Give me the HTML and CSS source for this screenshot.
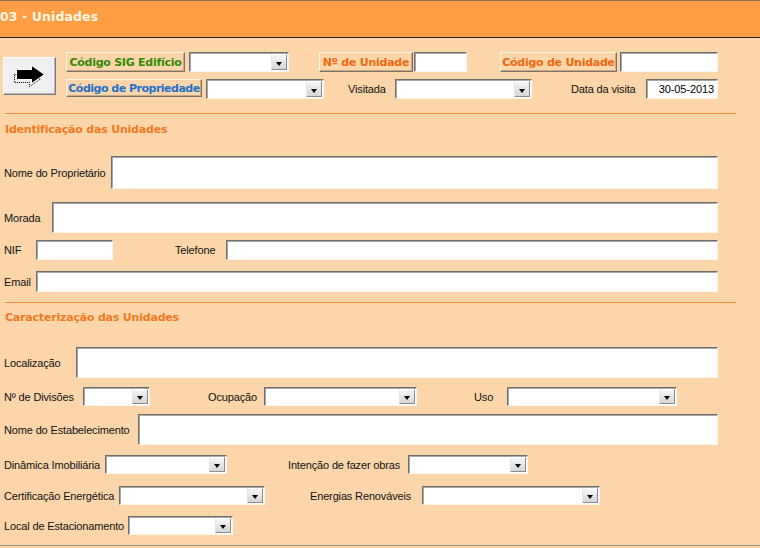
FILE: index.html
```html
<!DOCTYPE html>
<html lang="pt">
<head>
<meta charset="utf-8">
<title>03 - Unidades</title>
<link rel="stylesheet" href="styles.css">
</head>
<body>
<div class="form">
  <div class="titlebar">03 - Unidades</div>

  <div class="top">
    <div class="gobtn" role="button" aria-label="Ir">
      <svg width="51" height="36" viewBox="0 0 51 36">
        <path d="M10.5 16.5 H25.5 V13.5 L36.5 21 L25.5 28.5 V24.5 H10.5 Z" fill="none" stroke="#000" stroke-width="1" stroke-dasharray="1 1"/>
        <path d="M13 12 H28 V8.5 L39.5 16.5 L28 24.5 V21 H13 Z" fill="#000" stroke="#ffffff" stroke-width="1.5" paint-order="stroke"/>
        <path d="M13 12 H28 V8.5 L39.5 16.5 L28 24.5 V21 H13 Z" fill="#000"/>
      </svg>
    </div>
    <div class="toprows">
      <div class="trow">
        <span class="tag green w119">Código SIG Edifício</span>
        <div class="combo ml4 w100"><span class="dd"></span></div>
        <span class="tag orange ml30 w94">Nº de Unidade</span>
        <div class="field ml1 w53"></div>
        <span class="tag orange ml33 w117">Código de Unidade</span>
        <div class="field ml3 w98"></div>
      </div>
      <div class="trow">
        <span class="tag blue tight w136 h18">Código de Propriedade</span>
        <div class="combo ml4 w118"><span class="dd"></span></div>
        <span class="lbl ml24 w47">Visitada</span>
        <div class="combo w137"><span class="dd"></span></div>
        <span class="lbl ml39 w75">Data da visita</span>
        <div class="field date w72">30-05-2013</div>
      </div>
    </div>
  </div>

  <div class="sep sep1"></div>
  <div class="section-title st1">Identificação das Unidades</div>

  <div class="row r-nome h33"><span class="lbl w107">Nome do Proprietário</span><div class="field grow"></div></div>
  <div class="row r-morada h31"><span class="lbl w48">Morada</span><div class="field grow"></div></div>
  <div class="row r-nif h20">
    <span class="lbl w32">NIF</span><div class="field w77"></div>
    <span class="lbl ml62 w51">Telefone</span><div class="field grow"></div>
  </div>
  <div class="row r-email h21"><span class="lbl w32">Email</span><div class="field grow"></div></div>

  <div class="sep sep2"></div>
  <div class="section-title st2">Caracterização das Unidades</div>

  <div class="row r-loc h31"><span class="lbl w72">Localização</span><div class="field grow"></div></div>
  <div class="row r-div h19">
    <span class="lbl w79">Nº de Divisões</span><div class="combo w67"><span class="dd"></span></div>
    <span class="lbl ml58 w56">Ocupação</span><div class="combo w153"><span class="dd"></span></div>
    <span class="lbl ml57 w33">Uso</span><div class="combo w170"><span class="dd"></span></div>
  </div>
  <div class="row r-est h31"><span class="lbl w134">Nome do Estabelecimento</span><div class="field grow"></div></div>
  <div class="row r-din h19">
    <span class="lbl w101">Dinâmica Imobiliária</span><div class="combo w122"><span class="dd"></span></div>
    <span class="lbl ml61 w120">Intenção de fazer obras</span><div class="combo w120"><span class="dd"></span></div>
  </div>
  <div class="row r-cert h19">
    <span class="lbl w115">Certificação Energética</span><div class="combo w146"><span class="dd"></span></div>
    <span class="lbl ml45 w112">Energias Renováveis</span><div class="combo w178"><span class="dd"></span></div>
  </div>
  <div class="row r-local h19">
    <span class="lbl w124">Local de Estacionamento</span><div class="combo w105"><span class="dd"></span></div>
  </div>

  <div class="bottomline"></div>
</div>
</body>
</html>
```

FILE: styles.css
```css
* { box-sizing: border-box; }
html, body { margin: 0; padding: 0; }
body {
  width: 760px;
  height: 548px;
  overflow: hidden;
  background: #fdd5ab;
  font-family: "Liberation Sans", Arial, sans-serif;
  font-size: 11px;
  color: #111;
}
.form { width: 760px; height: 548px; }

.titlebar {
  height: 38px;
  background: #fe9e44;
  border-top: 1px solid #8d6a4c;
  border-bottom: 1px solid #2a2420;
  color: #fff6e4;
  font-family: "DejaVu Sans", Verdana, sans-serif;
  font-weight: bold;
  font-size: 12.5px;
  letter-spacing: 0.1px;
  line-height: 32px;
  padding-left: 0;
}

.top {
  display: flex;
  align-items: center;
  padding: 14px 0 0 3px;
}
.gobtn {
  flex: none;
  width: 53px;
  height: 38px;
  background: #efefef;
  border: 1px solid;
  border-color: #ffffff #7a7a7a #7a7a7a #ffffff;
  box-shadow: inset -1px -1px 0 #b8b8b8;
}
.gobtn svg { display: block; }
.toprows {
  margin-left: 10px;
  display: flex;
  flex-direction: column;
  gap: 7px;
}
.trow {
  display: flex;
  align-items: center;
  height: 20px;
}
.trow > * { height: 20px; }
.trow > .lbl { line-height: 20px; }
.trow > .h18 { height: 18px; align-self: flex-start; }

.tag {
  display: flex;
  align-items: center;
  justify-content: center;
  font-family: "DejaVu Sans", Verdana, sans-serif;
  font-weight: bold;
  font-size: 11px;
  letter-spacing: -0.25px;
  white-space: nowrap;
  overflow: hidden;
  border: 1px solid;
  border-color: #fff3e6 #7d7066 #7d7066 #fff3e6;
  box-shadow: inset -1px -1px 0 #c9a888;
}
.tag.tight { letter-spacing: -0.5px; }
.green { color: #2f8a06; }
.orange { color: #f2680e; }
.blue { color: #1b72c8; }

.lbl {
  display: block;
  white-space: nowrap;
  letter-spacing: -0.15px;
  flex: none;
}

.field, .combo {
  flex: none;
  background: #ffffff;
  border: 1px solid;
  border-color: #6e6e6e #fff4ea #fff4ea #6e6e6e;
  box-shadow: inset 1px 1px 0 #a9a9a9;
}
.field.grow { flex: 1 1 auto; }
.field.date {
  text-align: right;
  padding-right: 3px;
  line-height: 18px;
  color: #000;
  letter-spacing: -0.1px;
}
.combo {
  display: flex;
  justify-content: flex-end;
  align-items: center;
  padding: 1px 1px 1px 0;
}
.dd {
  display: flex;
  align-items: center;
  justify-content: center;
  width: 16px;
  height: 100%;
  background: linear-gradient(#f6f6f6, #d6d6d6);
  border: 1px solid;
  border-color: #ffffff #8c8c8c #8c8c8c #e6e6e6;
}
.dd::after {
  content: "";
  display: block;
  margin-top: 3px;
  border-left: 3px solid transparent;
  border-right: 3px solid transparent;
  border-top: 4px solid #000;
}

.sep {
  height: 1px;
  background: #e8903c;
  margin-left: 5px;
  margin-right: 24px;
}
.sep1 { margin-top: 14px; }
.sep2 { margin-top: 10px; }

.section-title {
  height: 14px;
  line-height: 14px;
  padding-left: 5px;
  font-family: "DejaVu Sans", Verdana, sans-serif;
  font-weight: bold;
  font-size: 11px;
  letter-spacing: -0.2px;
  color: #f07a22;
}
.st1 { margin-top: 9px; }
.st2 { margin-top: 8px; }

.row {
  display: flex;
  align-items: center;
  padding: 0 42px 0 4px;
}
.row > .field, .row > .combo { align-self: stretch; }

.h33 { height: 33px; }
.h31 { height: 31px; }
.h21 { height: 21px; }
.h20 { height: 20px; }
.h19 { height: 19px; }

.r-nome { margin-top: 19px; }
.r-morada { margin-top: 13px; }
.r-nif { margin-top: 7px; }
.r-email { margin-top: 11px; }
.r-loc { margin-top: 22px; }
.r-div { margin-top: 9px; }
.r-est { margin-top: 8px; }
.r-din { margin-top: 10px; }
.r-cert { margin-top: 12px; }
.r-local { margin-top: 11px; }

.bottomline {
  margin-top: 10px;
  height: 1px;
  background: #9c9088;
}

.ml1 { margin-left: 1px; }
.ml3 { margin-left: 3px; }
.ml4 { margin-left: 4px; }
.ml24 { margin-left: 24px; }
.ml30 { margin-left: 30px; }
.ml33 { margin-left: 33px; }
.ml39 { margin-left: 39px; }
.ml45 { margin-left: 45px; }
.ml57 { margin-left: 57px; }
.ml58 { margin-left: 58px; }
.ml61 { margin-left: 61px; }
.ml62 { margin-left: 62px; }

.w32 { width: 32px; }
.w33 { width: 33px; }
.w47 { width: 47px; }
.w48 { width: 48px; }
.w51 { width: 51px; }
.w53 { width: 53px; }
.w56 { width: 56px; }
.w67 { width: 67px; }
.w72 { width: 72px; }
.w75 { width: 75px; }
.w77 { width: 77px; }
.w79 { width: 79px; }
.w94 { width: 94px; }
.w98 { width: 98px; }
.w100 { width: 100px; }
.w101 { width: 101px; }
.w105 { width: 105px; }
.w107 { width: 107px; }
.w112 { width: 112px; }
.w115 { width: 115px; }
.w117 { width: 117px; }
.w118 { width: 118px; }
.w119 { width: 119px; }
.w120 { width: 120px; }
.w122 { width: 122px; }
.w124 { width: 124px; }
.w134 { width: 134px; }
.w136 { width: 136px; }
.w137 { width: 137px; }
.w146 { width: 146px; }
.w153 { width: 153px; }
.w170 { width: 170px; }
.w178 { width: 178px; }
```
